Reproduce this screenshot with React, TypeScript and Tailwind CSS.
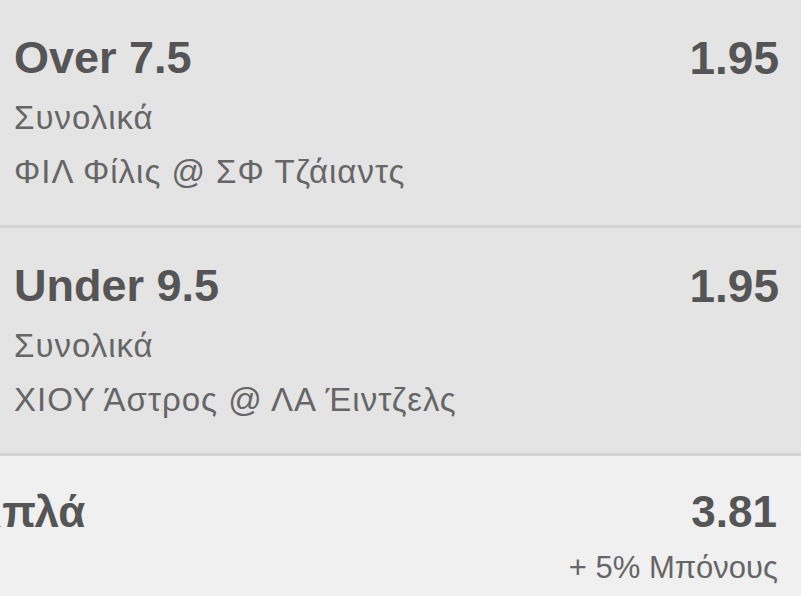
const legs = [
  { pick: "Over 7.5", odds: "1.95", market: "Συνολικά", game: "ΦΙΛ Φίλις @ ΣΦ Τζάιαντς" },
  { pick: "Under 9.5", odds: "1.95", market: "Συνολικά", game: "ΧΙΟΥ Άστρος @ ΛΑ Έιντζελς" },
];

export default function App() {
  return (
    <div className="w-[801px] h-[596px] overflow-hidden bg-[#f0f0f0] font-['Liberation_Sans',Arial,sans-serif]">
      {legs.map((leg) => (
        <div
          key={leg.pick}
          className="h-[228px] bg-[#e4e4e4] border-b-[3px] border-[#d4d4d4] pl-[14px] pr-[22px] pt-[35px]"
        >
          <div className="flex items-start justify-between">
            <span className="text-[45px] leading-none font-bold text-[#555555]">{leg.pick}</span>
            <span className="text-[46px] leading-none font-bold text-[#555555]">{leg.odds}</span>
          </div>
          <div className="mt-[10px] text-[33px] leading-[54px] tracking-[1px] text-[#666666]">
            <div>{leg.market}</div>
            <div>{leg.game}</div>
          </div>
        </div>
      ))}
      <div className="pt-[34px] pr-[23px] flex items-start justify-between">
        <span className="-ml-[64px] text-[44px] leading-none font-bold text-[#555555]">Τριπλά</span>
        <div className="flex flex-col items-end">
          <span className="mr-[1px] text-[44px] leading-none font-bold text-[#555555]">3.81</span>
          <span className="mt-[18px] text-[31px] leading-none text-[#666666]">+ 5% Μπόνους</span>
        </div>
      </div>
    </div>
  );
}
